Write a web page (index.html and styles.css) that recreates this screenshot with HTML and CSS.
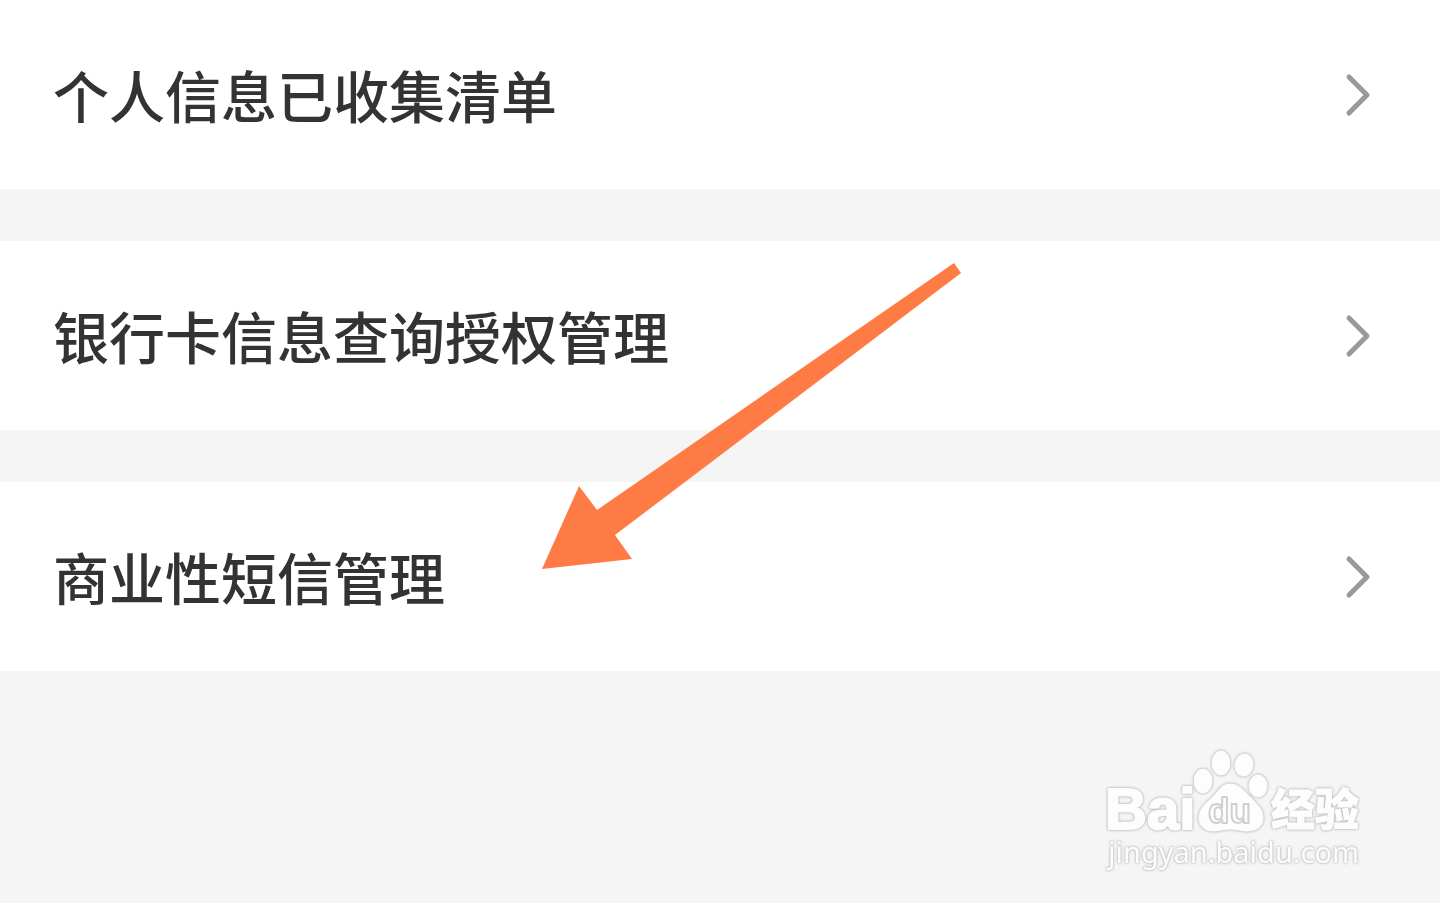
FILE: index.html
```
<!DOCTYPE html>
<html lang="zh-CN">
  <head>
    <meta charset="UTF-8" />
    <meta name="viewport" content="width=device-width, initial-scale=1.0" />
    <title>个人信息管理</title>
    <link rel="stylesheet" href="styles.css">
  </head>
  <body>
    <nav class="menu">
      <a class="menu-item" href="#collected">
        <span>个人信息已收集清单</span>
        <svg class="chevron" viewBox="0 0 26 42" aria-hidden="true"><path d="M4 4 22 22 4 40" /></svg>
      </a>
      <a class="menu-item" href="#bank-card">
        <span>银行卡信息查询授权管理</span>
        <svg class="chevron" viewBox="0 0 26 42" aria-hidden="true"><path d="M4 4 22 22 4 40" /></svg>
      </a>
      <a class="menu-item" href="#sms">
        <span>商业性短信管理</span>
        <svg class="chevron" viewBox="0 0 26 42" aria-hidden="true"><path d="M4 4 22 22 4 40" /></svg>
      </a>

      <!-- Pointer to the SMS entry -->
      <svg class="arrow" viewBox="0 0 420 306" aria-hidden="true">
        <path d="M412 0 419 10 73 272 90 296 0 306 37 223 55 247Z" />
      </svg>
    </nav>

    <!-- Watermark -->
    <svg class="watermark" viewBox="0 0 270 130" role="img" aria-label="Baidu 经验">
      <text class="wm-baidu" x="9" y="82">Bai</text>
      <ellipse cx="107" cy="34" rx="9" ry="12" />
      <ellipse cx="125" cy="16" rx="9" ry="12" />
      <ellipse cx="148" cy="18" rx="9" ry="11" transform="rotate(8 148 18)" />
      <ellipse cx="162" cy="39" rx="9" ry="11" />
      <path d="M134 37C144 37 149 45 155 51C162 58 167 63 167 71C167 80 160 84 151 84C145 84 140 82 134 82C128 82 124 84 117 84C108 84 103 78 103 71C103 62 109 57 116 51C122 45 125 37 134 37Z" />
      <text class="wm-du" x="112" y="76">du</text>
      <text class="wm-exp" x="175" y="79">经验</text>
      <text class="wm-url" x="12" y="116">jingyan.baidu.com</text>
    </svg>
  </body>
</html>
```
FILE: styles.css
```
* {
  box-sizing: border-box;
}

body {
  position: relative;
  min-height: 100vh;
  margin: 0;
  background: #f5f5f5;
  font-family: "Noto Sans CJK SC", sans-serif;
}

.menu {
  position: relative;
  display: flex;
  flex-direction: column;
  gap: 52px;
}

.menu-item {
  display: flex;
  align-items: center;
  justify-content: space-between;
  padding: 52px 69px 53px 53px;
  background: #fff;
  color: #333;
  font-size: 56px;
  font-weight: 500;
  line-height: 84px;
  text-decoration: none;
}

.chevron {
  width: 26px;
  height: 42px;
  overflow: visible;
  fill: none;
  stroke: #999;
  stroke-width: 5;
  stroke-linecap: round;
  stroke-linejoin: round;
}

.arrow {
  position: absolute;
  top: 263px;
  left: 542px;
  width: 420px;
  height: 306px;
  fill: #ff7b46;
  pointer-events: none;
}

.watermark {
  position: absolute;
  right: 74px;
  bottom: 26px;
  width: 270px;
  height: 130px;
  fill: #fdfdfd;
  stroke: #fdfdfd;
  stroke-width: 1;
  stroke-linejoin: round;
  filter: drop-shadow(0 0 1px #bbb) drop-shadow(0 0 1px #ccc);
}

.wm-baidu {
  font: bold 58px "Liberation Sans", sans-serif;
  stroke-width: 2;
}

.watermark .wm-du {
  font: bold 35px "Liberation Sans", sans-serif;
  stroke: #d0d0d0;
  stroke-width: 2;
}

.wm-exp {
  font: 900 44px "Noto Sans CJK SC", sans-serif;
}

.wm-url {
  font: 29px "Noto Sans", sans-serif;
  stroke: none;
}
```
